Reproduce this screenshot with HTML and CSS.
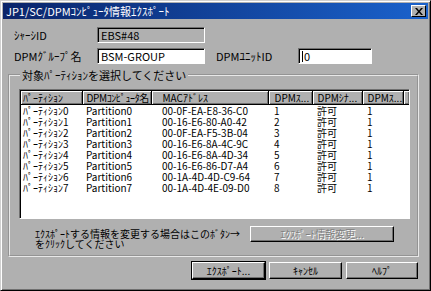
FILE: index.html
```html
<!DOCTYPE html>
<html lang="ja">
<head>
  <meta charset="UTF-8">
  <title>JP1/SC/DPMｺﾝﾋﾟｭｰﾀ情報ｴｸｽﾎﾟｰﾄ</title>
  <link rel="stylesheet" href="styles.css">
</head>
<body>
  <div class="window">
    <div class="titlebar">
      <span class="title">JP1/SC/DPMｺﾝﾋﾟｭｰﾀ情報ｴｸｽﾎﾟｰﾄ</span>
      <span class="close">
        <svg width="8" height="7" viewBox="0 0 8 7"><path d="M0 0h2l2 2.5L6 0h2L5 3.5 8 7H6L4 4.5 2 7H0l3-3.5z" fill="#000"/></svg>
      </span>
    </div>

    <div class="fields">
      <div class="row">
        <label class="lbl">ｼｬｰｼID</label>
        <div class="edit readonly w108">EBS#48</div>
      </div>
      <div class="row">
        <label class="lbl">DPMｸﾞﾙｰﾌﾟ名</label>
        <div class="edit w108">BSM-GROUP</div>
        <label class="lbl lbl2">DPMﾕﾆｯﾄID</label>
        <div class="edit w74"><span class="caret"></span>0</div>
      </div>
    </div>

    <fieldset class="group">
      <legend>対象ﾊﾟｰﾃｨｼｮﾝを選択してください</legend>
      <div class="list">
        <table>
          <colgroup>
            <col style="width:61px"><col style="width:69px"><col style="width:117px">
            <col style="width:44px"><col style="width:50px"><col style="width:41px"><col>
          </colgroup>
          <thead>
            <tr>
              <th class="c1">ﾊﾟｰﾃｨｼｮﾝ</th>
              <th class="c2 tight">DPMｺﾝﾋﾟｭｰﾀ名</th>
              <th class="c3">MACｱﾄﾞﾚｽ</th>
              <th class="c4">DPMｽ...</th>
              <th class="c5">DPMｼﾅ...</th>
              <th class="c6">DPMｽ...</th>
              <th class="rest"></th>
            </tr>
          </thead>
          <tbody id="rows"></tbody>
        </table>
      </div>
      <div class="note">
        <p>ｴｸｽﾎﾟｰﾄする情報を変更する場合はこのﾎﾞﾀﾝ→<br>をｸﾘｯｸしてください</p>
        <button class="btn disabled wide" disabled>ｴｸｽﾎﾟｰﾄ情報変更...</button>
      </div>
    </fieldset>

    <div class="actions">
      <button class="btn default">ｴｸｽﾎﾟｰﾄ...</button>
      <button class="btn">ｷｬﾝｾﾙ</button>
      <button class="btn last">ﾍﾙﾌﾟ</button>
    </div>
  </div>

  <script>
    const macs = ['00-0F-EA-E8-36-C0','00-16-E6-80-A0-42','00-0F-EA-F5-3B-04','00-16-E6-8A-4C-9C',
                  '00-16-E6-8A-4D-34','00-16-E6-86-D7-A4','00-1A-4D-4D-C9-64','00-1A-4D-4E-09-D0'];
    const tbody = document.getElementById('rows');
    macs.forEach((mac, i) => {
      tbody.innerHTML += `
        <tr>
          <td class="c1">ﾊﾟｰﾃｨｼｮﾝ${i}</td>
          <td class="c2">Partition${i}</td>
          <td class="c3">${mac}</td>
          <td class="c4">${i + 1}</td>
          <td class="c5">許可</td>
          <td class="c6">1</td>
          <td></td>
        </tr>`;
    });
  </script>
</body>
</html>
```

FILE: styles.css
```css
* { box-sizing: border-box; }
body {
  margin: 0;
  font-family: "Noto Sans CJK JP", "Liberation Sans", sans-serif;
  font-size: 11px;
  color: #000;
}
.window {
  width: 431px;
  height: 291px;
  background: #b0b0b0;
  border: 1px solid;
  border-color: #d0d0d0 #000 #000 #d0d0d0;
  box-shadow: inset 1px 1px 0 #fff, inset -1px -1px 0 #707070;
  padding: 2px;
}
.titlebar {
  height: 16px;
  background: linear-gradient(to right, #0a246a, #1a62cc);
  color: #fff;
  display: flex;
  align-items: center;
  justify-content: space-between;
  padding: 0 2px 0 3px;
  line-height: 16px;
}
.close {
  width: 15px;
  height: 12px;
  background: #b0b0b0;
  border: 1px solid;
  border-color: #fff #000 #000 #fff;
  display: flex;
  align-items: center;
  justify-content: center;
}
.fields {
  padding-left: 11px;
  padding-top: 8px;
}
.row {
  display: flex;
  align-items: center;
  height: 16px;
  margin-bottom: 5px;
}
.lbl {
  width: 83px;
  line-height: 12px;
}
.lbl2 {
  margin-left: 11px;
  width: 82px;
}
.edit {
  height: 16px;
  background: #fff;
  border: 1px solid;
  border-color: #707070 #fff #fff #707070;
  box-shadow: inset 1px 1px 0 #000;
  padding: 0 3px;
  line-height: 14px;
  display: flex;
  align-items: center;
}
.edit.readonly { background: #b0b0b0; }
.w108 { width: 108px; }
.w74 { width: 74px; }
.caret {
  width: 1px;
  height: 11px;
  background: #000;
  margin-right: 1px;
}
.group {
  margin: 0 9px 0 5px;
  padding: 8px 8px 6px 9px;
  border: 2px groove #e8e8e8;
  min-width: 0;
}
.group legend {
  padding: 0 2px;
  margin-left: 1px;
  line-height: 12px;
}
.list {
  width: 391px;
  height: 130px;
  background: #fff;
  border: 1px solid;
  border-color: #707070 #fff #fff #707070;
  box-shadow: inset 1px 1px 0 #000;
  padding: 1px 0 0 1px;
  overflow: hidden;
  font-size: 10px;
}
.list table {
  width: 388px;
  border-collapse: collapse;
  table-layout: fixed;
}
.list th {
  height: 13px;
  background: #b0b0b0;
  font-weight: normal;
  text-align: left;
  border-right: 1px solid #000;
  border-bottom: 1px solid #000;
  box-shadow: inset 1px 1px 0 #fff, inset -1px -1px 0 #707070;
  line-height: 11px;
  white-space: nowrap;
  overflow: hidden;
  padding-top: 0;
  padding-bottom: 0;
}
.list th.tight { letter-spacing: -0.4px; }
.list th.rest { border-right: none; }
.list td {
  height: 11px;
  line-height: 11px;
  white-space: nowrap;
  padding-top: 0;
  padding-bottom: 0;
}
.c1 { padding-left: 2px; }
.c2 { padding-left: 4px; }
.c3 { padding-left: 11px; }
.c4 { padding-left: 6px; }
.c5 { padding-left: 5px; }
.c6 { padding-left: 5px; }
.note {
  display: flex;
  justify-content: space-between;
  align-items: flex-start;
  padding: 6px 15px 0 16px;
}
.note p {
  margin: 4px 0 0;
  line-height: 10px;
  font-size: 10px;
  white-space: nowrap;
}
.btn {
  font-family: inherit;
  font-size: 10px;
  height: 17px;
  width: 73px;
  padding: 0;
  background: #b0b0b0;
  color: #000;
  border: 1px solid;
  border-color: #fff #000 #000 #fff;
  box-shadow: inset -1px -1px 0 #707070;
  line-height: 14px;
}
.btn.wide {
  width: 144px;
  height: 16px;
  margin-top: 1px;
}
.btn.disabled {
  color: #808080;
  text-shadow: 1px 1px 0 #fff;
}
.btn.default {
  outline: 1px solid #000;
}
.btn.last { width: 72px; }
.actions {
  display: flex;
  justify-content: flex-end;
  gap: 4px;
  margin: 5px 10px 0 0;
}
```
